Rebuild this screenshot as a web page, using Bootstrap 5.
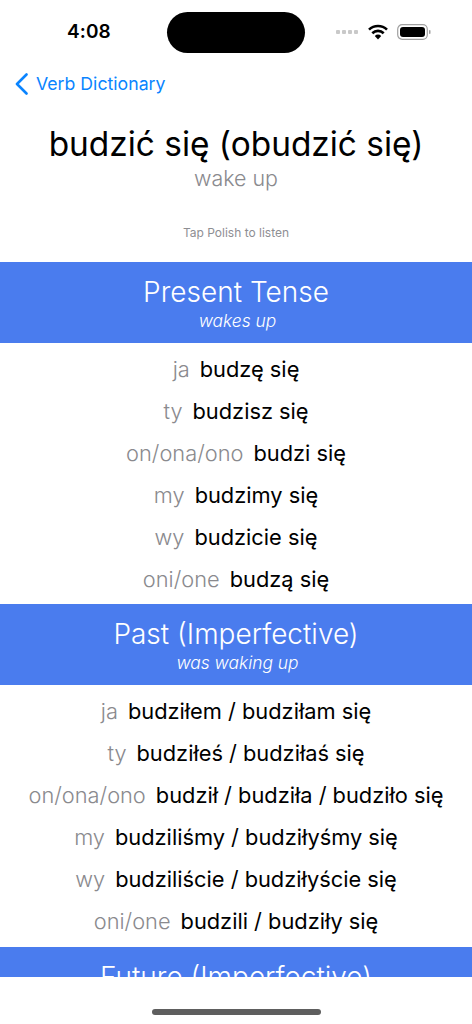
<!DOCTYPE html>
<html lang="pl">
<head>
<meta charset="utf-8">
<title>budzić się</title>
<link rel="stylesheet" href="https://cdn.jsdelivr.net/npm/bootstrap@5.3.0/dist/css/bootstrap.min.css">
<style>
html,body{height:1024px;overflow:hidden;background:#fff}
body{font-family:Inter,"Noto Sans",sans-serif;color:#000}
.phone{height:1024px;width:472px}
.statusbar{height:66px;padding:12px 41px 0 67px}
.clock{font-size:19px;font-weight:600;line-height:40px;width:100px;letter-spacing:.1px}
.statusicons{height:40px}
.island{width:138px;height:41px;background:#000;border-radius:21px;left:167px;top:12px}
.signal-dots{gap:2px;margin-right:9px}
.signal-dots i{width:4px;height:4px;border-radius:1px;background:#c9c9c9;display:block}
.backbar{height:36px;padding-left:15px;font-size:17.7px;gap:8px}
.backbar a{color:#0a84ff;text-decoration:none}
.verb-title{font-size:33.4px;line-height:40px;margin:22px 0 0}
.verb-gloss{font-size:21.4px;line-height:30px;color:#8a8a8e;font-weight:300;margin-top:-1px}
.hint{font-size:12px;line-height:16px;color:#8e8e93;margin-top:32px;height:37px}
.viewport{height:977px}
.tense{background:#4a7cee;color:#fff;height:81px;padding-top:11px}
.tense-name{font-size:28px;line-height:38px;font-weight:300}
.tense-gloss{font-size:17.4px;line-height:20px;font-style:italic;font-weight:300;padding-left:3px}
.forms{padding:5px 0 4px}
.forms-long{padding-bottom:5px}
.form-row{height:42px;font-size:21.8px;gap:10px;white-space:nowrap}
.pron{color:#8a8a8e;font-weight:300}
.homebar{width:169px;height:6px;border-radius:3px;background:#5e5e5e;left:152px;top:1009px}
</style>
</head>
<body>
<div class="phone position-relative">
  <div class="viewport overflow-hidden">
    <div class="statusbar d-flex align-items-start justify-content-between">
      <div class="clock">4:08</div>
      <div class="d-flex align-items-center statusicons">
        <div class="d-flex signal-dots"><i></i><i></i><i></i><i></i></div>
        <svg width="22" height="16" viewBox="0 0 22 16" aria-label="wifi"><path d="M11 15.5l-3.2-3.6a4.6 4.6 0 0 1 6.4 0z" fill="#000"/><path d="M5.3 9.2a8.2 8.2 0 0 1 11.4 0M2 5.6a13 13 0 0 1 18 0" fill="none" stroke="#000" stroke-width="2.6"/></svg>
        <svg class="ms-2" width="34" height="16" viewBox="0 0 34 16" aria-label="battery"><rect x=".7" y=".7" width="29.6" height="14.6" rx="4.5" fill="none" stroke="#a0a0a0" stroke-width="1.2"/><rect x="3" y="3" width="25" height="10" rx="3" fill="#000"/><rect x="32" y="6" width="1.5" height="4" rx=".7" fill="#a0a0a0"/></svg>
      </div>
    </div>
    <div class="backbar d-flex align-items-center">
      <svg width="13" height="22" viewBox="0 0 13 22" aria-hidden="true"><path d="M11.5 1.5L2 11l9.500 9.500" fill="none" stroke="#0a84ff" stroke-width="2.600" stroke-linecap="round" stroke-linejoin="round"/></svg>
      <a href="#">Verb Dictionary</a>
    </div>
    <div class="text-center">
      <h1 class="verb-title fw-normal">budzić się (obudzić się)</h1>
      <div class="verb-gloss">wake up</div>
      <div class="hint">Tap Polish to listen</div>
    </div>
    <section>
      <div class="tense text-center"><div class="tense-name">Present Tense</div><div class="tense-gloss">wakes up</div></div>
      <div class="forms">
        <div class="form-row d-flex justify-content-center align-items-center"><span class="pron">ja</span><span>budzę się</span></div>
        <div class="form-row d-flex justify-content-center align-items-center"><span class="pron">ty</span><span>budzisz się</span></div>
        <div class="form-row d-flex justify-content-center align-items-center"><span class="pron">on/ona/ono</span><span>budzi się</span></div>
        <div class="form-row d-flex justify-content-center align-items-center"><span class="pron">my</span><span>budzimy się</span></div>
        <div class="form-row d-flex justify-content-center align-items-center"><span class="pron">wy</span><span>budzicie się</span></div>
        <div class="form-row d-flex justify-content-center align-items-center"><span class="pron">oni/one</span><span>budzą się</span></div>
      </div>
    </section>
    <section>
      <div class="tense text-center"><div class="tense-name">Past (Imperfective)</div><div class="tense-gloss">was waking up</div></div>
      <div class="forms forms-long">
        <div class="form-row d-flex justify-content-center align-items-center"><span class="pron">ja</span><span>budziłem / budziłam się</span></div>
        <div class="form-row d-flex justify-content-center align-items-center"><span class="pron">ty</span><span>budziłeś / budziłaś się</span></div>
        <div class="form-row d-flex justify-content-center align-items-center"><span class="pron">on/ona/ono</span><span>budził / budziła / budziło się</span></div>
        <div class="form-row d-flex justify-content-center align-items-center"><span class="pron">my</span><span>budziliśmy / budziłyśmy się</span></div>
        <div class="form-row d-flex justify-content-center align-items-center"><span class="pron">wy</span><span>budziliście / budziłyście się</span></div>
        <div class="form-row d-flex justify-content-center align-items-center"><span class="pron">oni/one</span><span>budzili / budziły się</span></div>
      </div>
    </section>
    <section>
      <div class="tense text-center"><div class="tense-name">Future (Imperfective)</div></div>
    </section>
  </div>
  <div class="island position-absolute"></div>
  <div class="homebar position-absolute"></div>
</div>
<script src="https://cdn.jsdelivr.net/npm/bootstrap@5.3.0/dist/js/bootstrap.bundle.min.js"></script>
</body>
</html>
